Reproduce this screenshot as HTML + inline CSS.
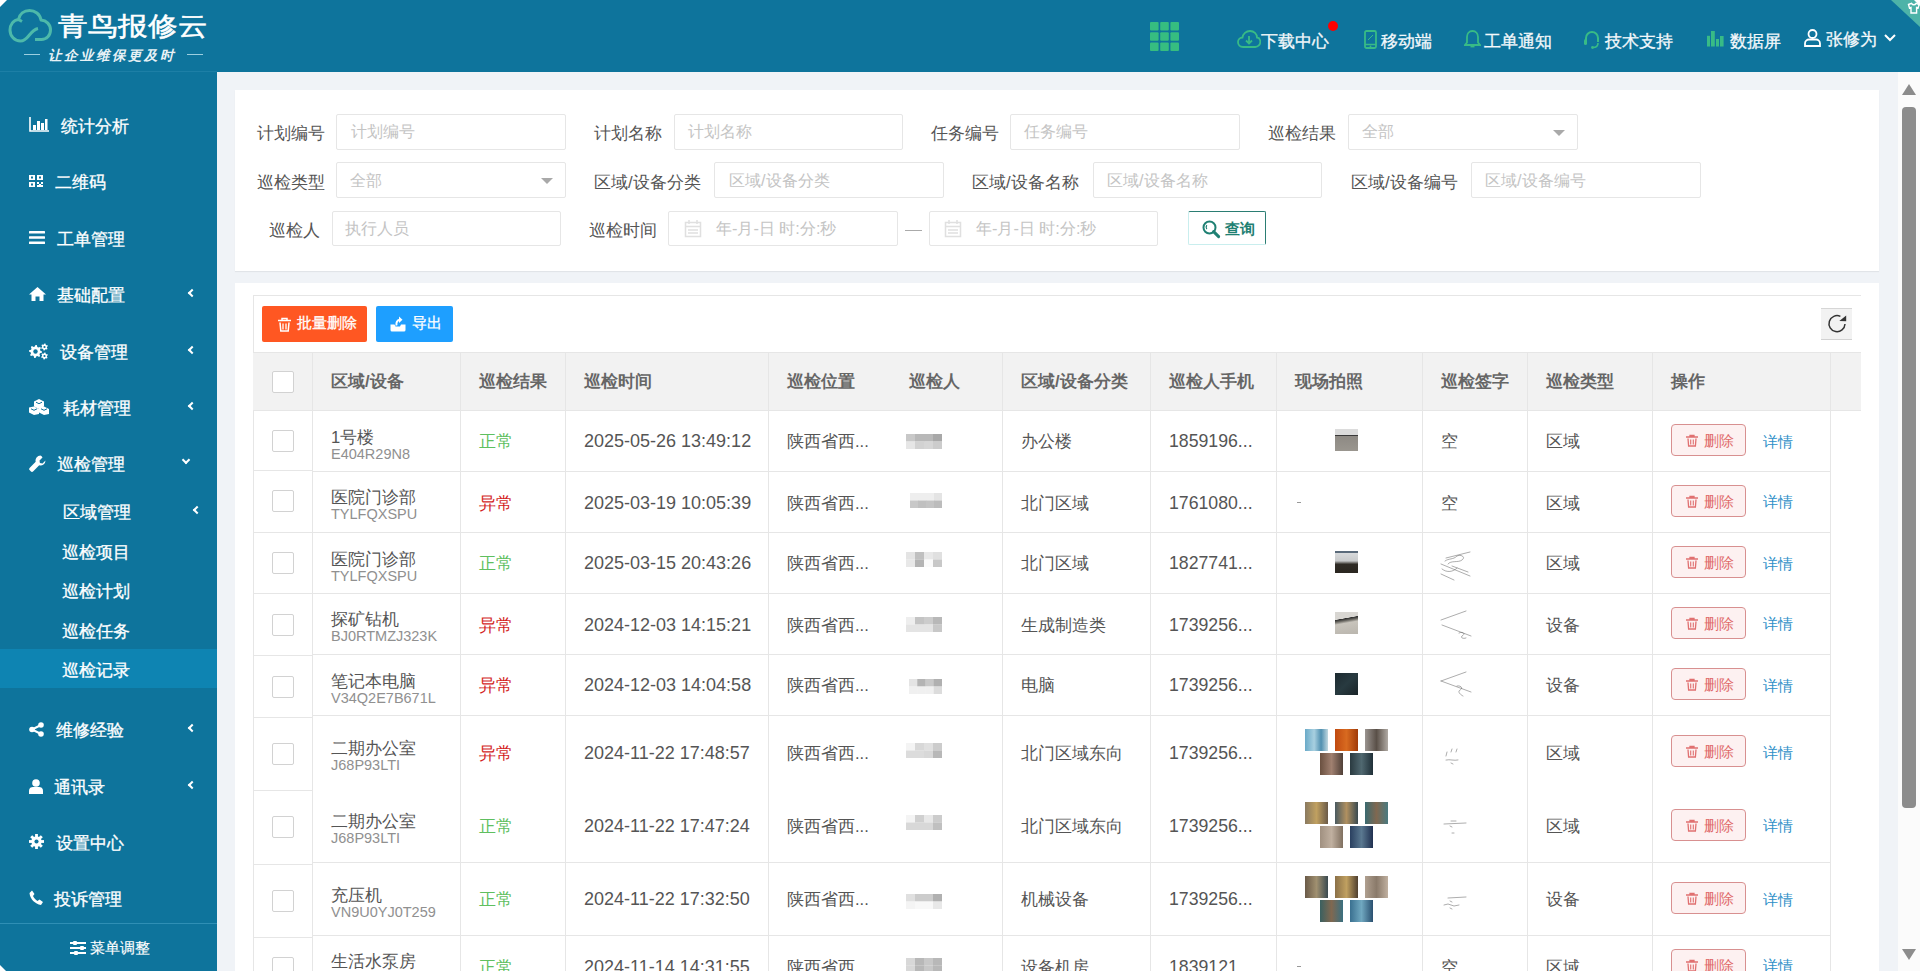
<!DOCTYPE html>
<html><head><meta charset="utf-8">
<style>
*{box-sizing:border-box;margin:0;padding:0}
html,body{width:1920px;height:971px;overflow:hidden;font-family:"Liberation Sans",sans-serif;background:#f0f3f7;position:relative}
.abs{position:absolute}
#hdr{position:absolute;left:0;top:0;width:1920px;height:72px;background:#0e749c}
#logo{position:absolute;left:0;top:0;width:217px;height:72px;border-bottom:1px solid #1d7fa6}
.nav{position:absolute;top:31px;-webkit-text-stroke:0.3px #f4f8fb;height:22px;color:#f4f8fb;font-size:17px;line-height:22px;white-space:nowrap}
#side{position:absolute;left:0;top:72px;width:217px;height:899px;background:#0e749c}
.mi{position:absolute;left:0;width:217px;height:40px;color:#fff;font-size:17px;-webkit-text-stroke:0.3px #fff;line-height:40px;white-space:nowrap}
.mi .t{position:absolute;top:1.5px}
.mi svg{position:absolute}
.chev{position:absolute;width:6px;height:6px;border-left:2px solid #fff;border-bottom:2px solid #fff}
#sbar{position:absolute;left:1898px;top:72px;width:22px;height:899px;background:#fbfbfb}

#card1{position:absolute;left:235px;top:90px;width:1644px;height:181px;background:#fff;box-shadow:0 1px 1px rgba(0,0,0,.06)}
.lb{position:absolute;height:22px;line-height:22px;font-size:16.6px;color:#555;white-space:nowrap}
.ip{position:absolute;height:36px;border:1px solid #e6e6e6;border-radius:2px;background:#fff}
.ph{position:absolute;top:6px;line-height:22px;font-size:16.3px;color:#c4c4c4;white-space:nowrap}
.caret{position:absolute;top:15px;width:0;height:0;border-left:6px solid transparent;border-right:6px solid transparent;border-top:6px solid #a9a9a9}

.btn{border-radius:2px;color:#fff;font-size:15px;line-height:20px;-webkit-text-stroke:0.3px #fff}
.cb{position:absolute;width:22px;height:22px;border:1px solid #d2d2d2;border-radius:2px;background:#fff}
.th{position:absolute;height:22px;line-height:22px;font-size:16.5px;font-weight:bold;color:#666;white-space:nowrap}
.nm{position:absolute;height:20px;line-height:20px;font-size:16.6px;color:#555;white-space:nowrap}
.cd{position:absolute;height:16px;line-height:16px;font-size:14.5px;color:#909090;white-space:nowrap}
.td{position:absolute;height:22px;line-height:22px;font-size:16.5px;color:#555;white-space:nowrap}
.tm{font-size:18px}
.phn{font-size:17.7px !important}
.blur{width:36px;height:14px;background:linear-gradient(90deg,#e4e4e4 0,#d4d4d4 25%,#c8c8c8 50%,#d0d0d0 75%,#bcbcbc 100%);opacity:.85}
.del{width:75px;height:32px;border:1px solid #d89090;border-radius:4px;background:#fdf1f1;color:#e06a6a;font-size:14.6px;line-height:20px}
.lk{position:absolute;height:20px;line-height:20px;font-size:14.6px;color:#2e8fc8;white-space:nowrap}
</style></head><body>
<div id="hdr">
  <div id="logo">
    <svg class="abs" style="left:0;top:0" width="60" height="50" viewBox="0 0 60 50"><path d="M35 39.5H41.5C46.5 39.5 50.5 35.5 50.5 30C50.5 24.5 46.5 20.5 41 20C40 14 35 10.5 29.5 10.5C24 10.5 19.5 14 18.5 19.5C13.5 20 10 24.5 10 30C10 36 14.5 41 20.5 41C24.5 41 27 38 29 35.5C31 33 33.5 29.5 38 28.5M18.5 19.5L22 21.5" fill="none" stroke="#4db9aa" stroke-width="3" stroke-linejoin="round"/></svg>
    <div class="abs" style="left:58px;top:9px;font-size:30px;line-height:36px;color:#fff;font-weight:normal;-webkit-text-stroke:0.6px #fff;transform:scaleY(0.88);transform-origin:0 14px">青鸟报修云</div>
    <div class="abs" style="left:24px;top:54px;width:16px;height:1px;background:#9ccfe0"></div>
    <div class="abs" style="left:48px;top:48px;font-size:13.5px;line-height:16px;color:#e8f2f6;letter-spacing:2px;font-weight:bold;font-style:italic;font-family:'Liberation Serif',serif">让企业维保更及时</div>
    <div class="abs" style="left:187px;top:54px;width:16px;height:1px;background:#9ccfe0"></div>
  </div>
  
  <svg class="abs" style="left:1150px;top:22px" width="29" height="29" viewBox="0 0 29 29"><g fill="#36bd80"><rect x="0" y="0" width="8.6" height="8.6" rx="1"/><rect x="10.2" y="0" width="8.6" height="8.6" rx="1"/><rect x="20.4" y="0" width="8.6" height="8.6" rx="1"/><rect x="0" y="10.2" width="8.6" height="8.6" rx="1"/><rect x="10.2" y="10.2" width="8.6" height="8.6" rx="1"/><rect x="20.4" y="10.2" width="8.6" height="8.6" rx="1"/><rect x="0" y="20.4" width="8.6" height="8.6" rx="1"/><rect x="10.2" y="20.4" width="8.6" height="8.6" rx="1"/><rect x="20.4" y="20.4" width="8.6" height="8.6" rx="1"/></g></svg>
  <svg class="abs" style="left:1237px;top:30px" width="24" height="18" viewBox="0 0 24 18"><path d="M6 17C3 17 1 15 1 12c0-2.5 2-4.5 4.5-4.5C6 4 9 1 13 1c4 0 7 3 7 6.5 2 .3 3.3 2.2 3.3 4.3 0 2.8-2.2 5.2-5 5.2z" fill="none" stroke="#38bb86" stroke-width="1.8"/><path d="M12 6v7M9 10.5l3 3 3-3" stroke="#38bb86" stroke-width="1.8" fill="none"/></svg>
  <div class="nav" style="left:1261px">下载中心</div>
  <div class="abs" style="left:1328px;top:21px;width:10px;height:10px;border-radius:50%;background:#f00"></div>
  <svg class="abs" style="left:1364px;top:30px" width="13" height="19" viewBox="0 0 13 19"><rect x="1" y="1" width="11" height="17" rx="1.5" fill="none" stroke="#38bb86" stroke-width="1.8"/><path d="M1 14.5h11" stroke="#38bb86" stroke-width="1.5"/><circle cx="6.5" cy="16.3" r=".9" fill="#38bb86"/><path d="M4 10l5-5" stroke="#38bb86" stroke-width="1"/></svg>
  <div class="nav" style="left:1381px">移动端</div>
  <svg class="abs" style="left:1464px;top:30px" width="17" height="18" viewBox="0 0 17 18"><path d="M8.5 1c-3.5 0-5.5 2.7-5.5 6v5.5L1 15h15l-2-2.5V7c0-3.3-2-6-5.5-6z" fill="none" stroke="#38bb86" stroke-width="1.8"/><path d="M6.5 16.5h4" stroke="#38bb86" stroke-width="1.8"/></svg>
  <div class="nav" style="left:1484px">工单通知</div>
  <svg class="abs" style="left:1583px;top:30px" width="18" height="19" viewBox="0 0 18 19"><path d="M3 12V8a6 6 0 0 1 12 0v4" fill="none" stroke="#38bb86" stroke-width="2"/><rect x="1" y="9" width="3" height="6" rx="1.5" fill="#38bb86"/><path d="M15 13c0 3-2 4.5-5 4.5" fill="none" stroke="#38bb86" stroke-width="1.6"/><circle cx="9.5" cy="17.5" r="1.4" fill="#38bb86"/></svg>
  <div class="nav" style="left:1605px">技术支持</div>
  <svg class="abs" style="left:1707px;top:30px" width="17" height="17" viewBox="0 0 17 17"><g fill="#38bb86"><rect x="0" y="5.8" width="3" height="10.7"/><rect x="4" y="1" width="3.8" height="15.5"/><rect x="9" y="9" width="3" height="7.5"/><rect x="13" y="6" width="3.6" height="10.5"/></g></svg>
  <div class="nav" style="left:1730px">数据屏</div>
  <svg class="abs" style="left:1804px;top:29px" width="17" height="18" viewBox="0 0 17 18"><circle cx="8.5" cy="5" r="4" fill="none" stroke="#fff" stroke-width="1.8"/><path d="M1 17v-2.5c0-2.5 2-4 4-4h7c2 0 4 1.5 4 4V17z" fill="none" stroke="#fff" stroke-width="1.8"/></svg>
  <div class="nav" style="left:1826px;top:29px">张修为</div>
  <svg class="abs" style="left:1884px;top:34px" width="12" height="8" viewBox="0 0 12 8"><path d="M1 1l5 5 5-5" fill="none" stroke="#fff" stroke-width="2"/></svg>
  <svg class="abs" style="left:1880px;top:0" width="40" height="40" viewBox="0 0 40 40"><path d="M11 0H40V27z" fill="#4db3a8"/><path d="M34 0h6v6z" fill="#fff"/><path d="M28.5 4.5l3-1.2c.6 1 1.4 1.5 2.3 1.5s1.7-.5 2.3-1.5l3 1.2-1 3.5-1.5-.5V13h-5.6V7.5l-1.5.5z" fill="none" stroke="#fff" stroke-width="1.4"/></svg>
<div class="abs" style="left:0;top:0;width:0;height:0;border-top:7px solid #fff;border-right:7px solid transparent"></div>
</div>
<div id="side">
<!-- y offsets relative to side top (72) -->
<div class="mi" style="top:33px"><svg style="left:29px;top:12px" width="20" height="15" viewBox="0 0 20 15"><path d="M1 0V14H20" stroke="#fff" stroke-width="1.6" fill="none"/><rect x="4" y="8" width="3" height="5" fill="#fff"/><rect x="8" y="4" width="3" height="9" fill="#fff"/><rect x="12" y="6" width="3" height="7" fill="#fff"/><rect x="16" y="2" width="2.5" height="11" fill="#fff"/></svg><span class="t" style="left:61px">统计分析</span></div>
<div class="mi" style="top:89px"><svg style="left:29px;top:14px" width="14" height="12" viewBox="0 0 14 12"><path d="M0 0h6v5H0zM8 0h6v5H8zM0 7h6v5H0z" fill="#fff"/><path d="M2 1.5h2v2H2zM10 1.5h2v2h-2zM2 8.5h2v2H2z" fill="#0f739c"/><path d="M8 7h2v2H8zM12 7h2v2h-2zM10 9h2v3h-2zM8 10h2v2H8zM12 10h2v2h-2z" fill="#fff"/></svg><span class="t" style="left:55px">二维码</span></div>
<div class="mi" style="top:146px"><svg style="left:29px;top:13px" width="16" height="13" viewBox="0 0 16 13"><rect y="0" width="16" height="2.6" rx=".5" fill="#fff"/><rect y="5.2" width="16" height="2.6" rx=".5" fill="#fff"/><rect y="10.4" width="16" height="2.6" rx=".5" fill="#fff"/></svg><span class="t" style="left:57px">工单管理</span></div>
<div class="mi" style="top:202px"><svg style="left:29px;top:13px" width="17" height="14" viewBox="0 0 17 14"><path d="M8.5 0L17 7.5h-2.5V14h-4V9.5h-4V14h-4V7.5H0z" fill="#fff"/></svg><span class="t" style="left:57px">基础配置</span><i class="chev" style="left:189px;top:16px;transform:rotate(45deg)"></i></div>
<div class="mi" style="top:259px"><svg style="left:29px;top:12px" width="20" height="17" viewBox="0 0 20 17"><path d="M6.50 2.00L7.77 2.12L8.34 4.07L9.17 4.51L11.10 3.90L11.90 4.89L10.93 6.66L11.21 7.56L13.00 8.50L12.88 9.77L10.93 10.34L10.49 11.17L11.10 13.10L10.11 13.90L8.34 12.93L7.44 13.21L6.50 15.00L5.23 14.88L4.66 12.93L3.83 12.49L1.90 13.10L1.10 12.11L2.07 10.34L1.79 9.44L0.00 8.50L0.12 7.23L2.07 6.66L2.51 5.83L1.90 3.90L2.89 3.10L4.66 4.07L5.56 3.79z" fill="#fff"/><circle cx="6.5" cy="8.5" r="2.2" fill="#0e749c"/><path d="M15.50 0.50L16.41 0.62L16.75 1.83L17.27 2.23L18.53 2.25L18.88 3.09L18.00 4.00L17.91 4.65L18.53 5.75L17.97 6.47L16.75 6.17L16.15 6.41L15.50 7.50L14.59 7.38L14.25 6.17L13.73 5.77L12.47 5.75L12.12 4.91L13.00 4.00L13.09 3.35L12.47 2.25L13.03 1.53L14.25 1.83L14.85 1.59z" fill="#fff"/><circle cx="15.5" cy="4" r="1.1" fill="#0e749c"/><path d="M15.50 9.50L16.41 9.62L16.75 10.83L17.27 11.23L18.53 11.25L18.88 12.09L18.00 13.00L17.91 13.65L18.53 14.75L17.97 15.47L16.75 15.17L16.15 15.41L15.50 16.50L14.59 16.38L14.25 15.17L13.73 14.77L12.47 14.75L12.12 13.91L13.00 13.00L13.09 12.35L12.47 11.25L13.03 10.53L14.25 10.83L14.85 10.59z" fill="#fff"/><circle cx="15.5" cy="13" r="1.1" fill="#0e749c"/></svg><span class="t" style="left:60px">设备管理</span><i class="chev" style="left:189px;top:16px;transform:rotate(45deg)"></i></div>
<div class="mi" style="top:315px"><svg style="left:29px;top:12px" width="20" height="16" viewBox="0 0 20 16"><path d="M10 0l5 2.5v5L10 10 5 7.5v-5z" fill="#fff"/><path d="M5 7.5l5 2.5v5l-5 1-5-2.5v-5z" fill="#fff"/><path d="M15 7.5l5 2.5v5l-5 1-5-2.5v-5z" fill="#fff"/><path d="M7 3.2l3 1.5 3-1.5M2 9.8l3 1.5 3-1.5M12 9.8l3 1.5 3-1.5" stroke="#0f739c" stroke-width="1" fill="none"/></svg><span class="t" style="left:63px">耗材管理</span><i class="chev" style="left:189px;top:16px;transform:rotate(45deg)"></i></div>
<div class="mi" style="top:371px"><svg style="left:29px;top:12px" width="17" height="17" viewBox="0 0 17 17"><path d="M11.5 0.5a5 5 0 0 0-4.8 6.3L0.8 12.7a1.8 1.8 0 0 0 0 2.6l0.9 0.9a1.8 1.8 0 0 0 2.6 0l5.9-5.9A5 5 0 0 0 16.5 5.5l-3 3-2.6-0.4-0.4-2.6 3-3a5 5 0 0 0-2-2z" fill="#fff"/></svg><span class="t" style="left:57px">巡检管理</span><i class="chev" style="left:183px;top:14px;transform:rotate(-45deg)"></i></div>
<div class="mi" style="top:419px"><span class="t" style="left:63px">区域管理</span><i class="chev" style="left:194px;top:16px;transform:rotate(45deg)"></i></div>
<div class="mi" style="top:459px"><span class="t" style="left:62px">巡检项目</span></div>
<div class="mi" style="top:498px"><span class="t" style="left:62px">巡检计划</span></div>
<div class="mi" style="top:538px"><span class="t" style="left:62px">巡检任务</span></div>
<div class="mi" style="top:577px;height:39px;background:#0e84b2"><span class="t" style="left:62px">巡检记录</span></div>
<div class="mi" style="top:637px"><svg style="left:29px;top:13px" width="15" height="15" viewBox="0 0 15 15"><circle cx="12" cy="3" r="2.8" fill="#fff"/><circle cx="3" cy="7.5" r="2.8" fill="#fff"/><circle cx="12" cy="12" r="2.8" fill="#fff"/><path d="M12 3L3 7.5 12 12" stroke="#fff" stroke-width="2" fill="none"/></svg><span class="t" style="left:56px">维修经验</span><i class="chev" style="left:189px;top:16px;transform:rotate(45deg)"></i></div>
<div class="mi" style="top:694px"><svg style="left:29px;top:13px" width="14" height="15" viewBox="0 0 14 15"><circle cx="7" cy="4" r="3.8" fill="#fff"/><path d="M0 15v-3.5C0 9 2 8 4 8h6c2 0 4 1 4 3.5V15z" fill="#fff"/></svg><span class="t" style="left:54px">通讯录</span><i class="chev" style="left:189px;top:16px;transform:rotate(45deg)"></i></div>
<div class="mi" style="top:750px"><svg style="left:29px;top:12px" width="15" height="15" viewBox="0 0 16 16"><g fill="#fff"><circle cx="8" cy="8" r="5.5"/><rect x="6.5" y="0" width="3" height="4" transform="rotate(0 8 8)"/><rect x="6.5" y="0" width="3" height="4" transform="rotate(45 8 8)"/><rect x="6.5" y="0" width="3" height="4" transform="rotate(90 8 8)"/><rect x="6.5" y="0" width="3" height="4" transform="rotate(135 8 8)"/><rect x="6.5" y="0" width="3" height="4" transform="rotate(180 8 8)"/><rect x="6.5" y="0" width="3" height="4" transform="rotate(225 8 8)"/><rect x="6.5" y="0" width="3" height="4" transform="rotate(270 8 8)"/><rect x="6.5" y="0" width="3" height="4" transform="rotate(315 8 8)"/></g><circle cx="8" cy="8" r="2.2" fill="#0f739c"/></svg><span class="t" style="left:56px">设置中心</span></div>
<div class="mi" style="top:806px"><svg style="left:29px;top:12px" width="14" height="15" viewBox="0 0 14 15"><path d="M3 0.5L5.5 4 4 6c1 2 2.5 3.8 4.5 5l2-1.5L14 12l-2 3C6 14 1 9 0.5 3z" fill="#fff"/></svg><span class="t" style="left:54px">投诉管理</span></div>
<div class="abs" style="left:0;top:851px;width:217px;height:1px;background:#2f8fb5"></div>
<div class="mi" style="top:854px;font-size:15px;-webkit-text-stroke:0.15px #fff"><svg style="left:70px;top:15px" width="16" height="14" viewBox="0 0 16 14"><path d="M0 2h16M0 7h16M0 12h16" stroke="#fff" stroke-width="2"/><rect x="3" y="0" width="4" height="4" rx="1" fill="#fff"/><rect x="10" y="5" width="4" height="4" rx="1" fill="#fff"/><rect x="4" y="10" width="4" height="4" rx="1" fill="#fff"/></svg><span class="t" style="left:90px">菜单调整</span></div>
<div class="abs" style="left:0;top:893px;width:0;height:0;border-bottom:6px solid #fff;border-right:6px solid transparent"></div>
</div>

<div id="card1"></div>
<div class="lb" style="left:257px;top:123px">计划编号</div>
<div class="ip" style="left:336px;top:114px;width:230px"><span class="ph" style="left:14px;top:5px">计划编号</span></div>
<div class="lb" style="left:594px;top:123px">计划名称</div>
<div class="ip" style="left:674px;top:114px;width:229px"><span class="ph" style="left:13px;top:5px">计划名称</span></div>
<div class="lb" style="left:931px;top:123px">任务编号</div>
<div class="ip" style="left:1010px;top:114px;width:230px"><span class="ph" style="left:13px;top:5px">任务编号</span></div>
<div class="lb" style="left:1268px;top:123px">巡检结果</div>
<div class="ip" style="left:1348px;top:114px;width:230px"><span class="ph" style="left:13px;top:5px">全部</span><i class="caret" style="left:204px"></i></div>

<div class="lb" style="left:257px;top:172px">巡检类型</div>
<div class="ip" style="left:336px;top:162px;width:230px"><span class="ph" style="left:13px">全部</span><i class="caret" style="left:204px;top:15px"></i></div>
<div class="lb" style="left:594px;top:172px">区域/设备分类</div>
<div class="ip" style="left:714px;top:162px;width:230px"><span class="ph" style="left:14px">区域/设备分类</span></div>
<div class="lb" style="left:972px;top:172px">区域/设备名称</div>
<div class="ip" style="left:1093px;top:162px;width:229px"><span class="ph" style="left:13px">区域/设备名称</span></div>
<div class="lb" style="left:1351px;top:172px">区域/设备编号</div>
<div class="ip" style="left:1471px;top:162px;width:230px"><span class="ph" style="left:13px">区域/设备编号</span></div>

<div class="lb" style="left:269px;top:220px">巡检人</div>
<div class="ip" style="left:332px;top:211px;width:229px;height:35px"><span class="ph" style="left:12px;top:5px">执行人员</span></div>
<div class="lb" style="left:589px;top:220px">巡检时间</div>
<div class="ip" style="left:668px;top:211px;width:230px;height:35px"><svg class="abs" style="left:15px;top:7px" width="18" height="19" viewBox="0 0 18 19"><path d="M1.5 3.5h15v14h-15z" fill="none" stroke="#e0e0e0" stroke-width="1.5"/><path d="M1.5 7.5h15M5 1v4M13 1v4M4 11h10M4 14h10" stroke="#e0e0e0" stroke-width="1.5"/></svg><span class="ph" style="left:47px;top:5px">年-月-日 时:分:秒</span></div>
<div class="abs" style="left:905px;top:230px;width:17px;height:1px;background:#aaa"></div>
<div class="ip" style="left:929px;top:211px;width:229px;height:35px"><svg class="abs" style="left:14px;top:7px" width="18" height="19" viewBox="0 0 18 19"><path d="M1.5 3.5h15v14h-15z" fill="none" stroke="#e0e0e0" stroke-width="1.5"/><path d="M1.5 7.5h15M5 1v4M13 1v4M4 11h10M4 14h10" stroke="#e0e0e0" stroke-width="1.5"/></svg><span class="ph" style="left:46px;top:5px">年-月-日 时:分:秒</span></div>
<div class="abs" style="left:1188px;top:211px;width:78px;height:34px;border:1px solid #2b7d73;border-left-color:#c9eeee;border-bottom-color:#c9eeee;border-radius:2px;background:#fff"><svg class="abs" style="left:13px;top:8px" width="19" height="19" viewBox="0 0 19 19"><circle cx="7.5" cy="7.5" r="6" fill="none" stroke="#1f8073" stroke-width="2"/><path d="M4.8 5.2a3.5 3.5 0 0 0 0 4" fill="none" stroke="#1f8073" stroke-width="1.2"/><path d="M11.6 11.6l5 5" stroke="#1f8073" stroke-width="3" stroke-linecap="round"/></svg><span class="abs" style="left:36px;top:7px;font-size:15px;line-height:20px;font-weight:bold;color:#1f8073">查询</span></div>
<div class="abs" style="left:235px;top:283px;width:1644px;height:688px;background:#fff"></div>
<div class="abs" style="left:253px;top:295px;width:1608px;height:676px;border-top:1px solid #e6e6e6;border-left:1px solid #e6e6e6"></div>
<div class="abs btn" style="left:262px;top:306px;width:105px;height:36px;background:#ff5722"><svg class="abs" style="left:15px;top:11px" width="15" height="15" viewBox="0 0 15 15"><path d="M1 3.5h13M5 3.5V1.5h5v2M3 5.5l.8 8.5h7.4l.8-8.5" fill="none" stroke="#fff" stroke-width="1.5"/><path d="M6 6.5v6M9 6.5v6" stroke="#fff" stroke-width="1.3"/></svg><span class="abs" style="left:35px;top:7px">批量删除</span></div>
<div class="abs btn" style="left:376px;top:306px;width:77px;height:36px;background:#1e9fff"><svg class="abs" style="left:14px;top:10px" width="16" height="16" viewBox="0 0 16 16"><path d="M0.5 8.5h4l1 2h4.5l1-2h4.5v5.5a1.5 1.5 0 0 1-1.5 1.5h-12a1.5 1.5 0 0 1-1.5-1.5z" fill="#fff"/><path d="M6.5 9.5C6 6.5 7 4.2 9.8 3.8" fill="none" stroke="#fff" stroke-width="2"/><path d="M9 0.5L12.5 3.8 9 7z" fill="#fff"/></svg><span class="abs" style="left:36px;top:7px">导出</span></div>
<div class="abs" style="left:1821px;top:308px;width:31px;height:32px;background:#f2f2f2;border-top:1px solid #d6d6d6;border-bottom:1px solid #d2d2d2"><svg class="abs" style="left:6px;top:5px" width="20" height="20" viewBox="0 0 20 20"><path d="M18 10A8 8 0 1 1 13.4 2.4" fill="none" stroke="#333" stroke-width="1.5"/><path d="M12.3 7L19.2 1.6V7.3z" fill="#333"/></svg></div>
<div class="abs" style="left:253px;top:352px;width:1608px;height:59px;background:#f2f2f2;border-top:1px solid #e6e6e6;border-bottom:1px solid #e6e6e6"></div>
<div class="abs" style="left:312px;top:352px;width:1px;height:59px;background:#e6e6e6"></div>
<div class="abs" style="left:460px;top:352px;width:1px;height:59px;background:#e6e6e6"></div>
<div class="abs" style="left:565px;top:352px;width:1px;height:59px;background:#e6e6e6"></div>
<div class="abs" style="left:768px;top:352px;width:1px;height:59px;background:#e6e6e6"></div>
<div class="abs" style="left:1002px;top:352px;width:1px;height:59px;background:#e6e6e6"></div>
<div class="abs" style="left:1150px;top:352px;width:1px;height:59px;background:#e6e6e6"></div>
<div class="abs" style="left:1276px;top:352px;width:1px;height:59px;background:#e6e6e6"></div>
<div class="abs" style="left:1422px;top:352px;width:1px;height:59px;background:#e6e6e6"></div>
<div class="abs" style="left:1527px;top:352px;width:1px;height:59px;background:#e6e6e6"></div>
<div class="abs" style="left:1652px;top:352px;width:1px;height:59px;background:#e6e6e6"></div>
<div class="abs" style="left:1830px;top:352px;width:1px;height:59px;background:#e6e6e6"></div>
<div class="abs cb" style="left:272px;top:371px"></div>
<div class="th" style="left:331px;top:370px">区域/设备</div>
<div class="th" style="left:479px;top:370px">巡检结果</div>
<div class="th" style="left:584px;top:370px">巡检时间</div>
<div class="th" style="left:787px;top:370px">巡检位置</div>
<div class="th" style="left:909px;top:370px">巡检人</div>
<div class="th" style="left:1021px;top:370px">区域/设备分类</div>
<div class="th" style="left:1169px;top:370px">巡检人手机</div>
<div class="th" style="left:1295px;top:370px">现场拍照</div>
<div class="th" style="left:1441px;top:370px">巡检签字</div>
<div class="th" style="left:1546px;top:370px">巡检类型</div>
<div class="th" style="left:1671px;top:370px">操作</div>
<div class="abs" style="left:312px;top:471px;width:1518px;height:1px;background:#e6e6e6"></div>
<div class="abs" style="left:312px;top:532px;width:1518px;height:1px;background:#e6e6e6"></div>
<div class="abs" style="left:312px;top:593px;width:1518px;height:1px;background:#e6e6e6"></div>
<div class="abs" style="left:312px;top:654px;width:1518px;height:1px;background:#e6e6e6"></div>
<div class="abs" style="left:312px;top:715px;width:1518px;height:1px;background:#e6e6e6"></div>
<div class="abs" style="left:312px;top:862px;width:1518px;height:1px;background:#e6e6e6"></div>
<div class="abs" style="left:312px;top:935px;width:1518px;height:1px;background:#e6e6e6"></div>
<div class="abs" style="left:253px;top:470px;width:59px;height:1px;background:#e6e6e6"></div>
<div class="abs" style="left:253px;top:532px;width:59px;height:1px;background:#e6e6e6"></div>
<div class="abs" style="left:253px;top:593px;width:59px;height:1px;background:#e6e6e6"></div>
<div class="abs" style="left:253px;top:655px;width:59px;height:1px;background:#e6e6e6"></div>
<div class="abs" style="left:253px;top:717px;width:59px;height:1px;background:#e6e6e6"></div>
<div class="abs" style="left:253px;top:790px;width:59px;height:1px;background:#e6e6e6"></div>
<div class="abs" style="left:253px;top:864px;width:59px;height:1px;background:#e6e6e6"></div>
<div class="abs" style="left:253px;top:937px;width:59px;height:1px;background:#e6e6e6"></div>
<div class="abs" style="left:312px;top:410px;width:1px;height:561px;background:#e6e6e6"></div>
<div class="abs" style="left:460px;top:410px;width:1px;height:561px;background:#e6e6e6"></div>
<div class="abs" style="left:565px;top:410px;width:1px;height:561px;background:#e6e6e6"></div>
<div class="abs" style="left:768px;top:410px;width:1px;height:561px;background:#e6e6e6"></div>
<div class="abs" style="left:1002px;top:410px;width:1px;height:561px;background:#e6e6e6"></div>
<div class="abs" style="left:1150px;top:410px;width:1px;height:561px;background:#e6e6e6"></div>
<div class="abs" style="left:1276px;top:410px;width:1px;height:561px;background:#e6e6e6"></div>
<div class="abs" style="left:1422px;top:410px;width:1px;height:561px;background:#e6e6e6"></div>
<div class="abs" style="left:1527px;top:410px;width:1px;height:561px;background:#e6e6e6"></div>
<div class="abs" style="left:1652px;top:410px;width:1px;height:561px;background:#e6e6e6"></div>
<div class="abs" style="left:1830px;top:410px;width:1px;height:561px;background:#e6e6e6"></div>
<div class="abs cb" style="left:272px;top:430px"></div>
<div class="nm" style="left:331px;top:428px">1号楼</div>
<div class="cd" style="left:331px;top:446px">E404R29N8</div>
<div class="td" style="left:479px;top:430px;color:#5fbf5f">正常</div>
<div class="td tm" style="left:584px;top:430px">2025-05-26 13:49:12</div>
<div class="td" style="left:787px;top:430px">陕西省西...</div>
<svg class="abs" style="left:906px;top:434px" width="36" height="15"><rect x="0.00" y="0" width="9.30" height="7.6" fill="#c8c8c8"/><rect x="9.00" y="0" width="9.30" height="7.6" fill="#b8b8b8"/><rect x="18.00" y="0" width="9.30" height="7.6" fill="#b8b8b8"/><rect x="27.00" y="0" width="9.30" height="7.6" fill="#a8a8a8"/><rect x="0.00" y="7.5" width="9.30" height="7.5" fill="#e6e6e6"/><rect x="9.00" y="7.5" width="9.30" height="7.5" fill="#d2d2d2"/><rect x="18.00" y="7.5" width="9.30" height="7.5" fill="#d6d6d6"/><rect x="27.00" y="7.5" width="9.30" height="7.5" fill="#cccccc"/></svg>
<div class="td" style="left:1021px;top:430px">办公楼</div>
<div class="td tm phn" style="left:1169px;top:430px">1859196...</div>
<div class="abs" style="left:1335px;top:429px;width:23px;height:22px;background:linear-gradient(#dcdcdc 0,#dcdcdc 26%,#3a3a3a 26%,#3a3a3a 34%,#8e8a84 34%,#9a968f 100%)"></div>
<div class="td" style="left:1441px;top:430px">空</div>
<div class="td" style="left:1546px;top:430px">区域</div>
<div class="abs del" style="left:1671px;top:424px"><svg class="abs" style="left:13px;top:9px" width="14" height="13" viewBox="0 0 14 13"><path d="M1 3h12M5 3V1.5h4V3M3 4.5l.6 7.5h6.8l.6-7.5" fill="none" stroke="#e07070" stroke-width="1.3"/><path d="M5.7 5.5v5M8.3 5.5v5" stroke="#e07070" stroke-width="1.1"/></svg><span class="abs" style="left:32px;top:6px">删除</span></div>
<div class="abs lk" style="left:1763px;top:432px">详情</div>
<div class="abs cb" style="left:272px;top:490px"></div>
<div class="nm" style="left:331px;top:488px">医院门诊部</div>
<div class="cd" style="left:331px;top:506px">TYLFQXSPU</div>
<div class="td" style="left:479px;top:492px;color:#d41f1f">异常</div>
<div class="td tm" style="left:584px;top:492px">2025-03-19 10:05:39</div>
<div class="td" style="left:787px;top:492px">陕西省西...</div>
<svg class="abs" style="left:910px;top:493px" width="32" height="15"><rect x="0.00" y="0" width="8.30" height="7.6" fill="#eeeeee"/><rect x="8.00" y="0" width="8.30" height="7.6" fill="#eeeeee"/><rect x="16.00" y="0" width="8.30" height="7.6" fill="#eeeeee"/><rect x="24.00" y="0" width="8.30" height="7.6" fill="#e4e4e4"/><rect x="0.00" y="7.5" width="8.30" height="7.5" fill="#c8c8c8"/><rect x="8.00" y="7.5" width="8.30" height="7.5" fill="#c0c0c0"/><rect x="16.00" y="7.5" width="8.30" height="7.5" fill="#c4c4c4"/><rect x="24.00" y="7.5" width="8.30" height="7.5" fill="#bcbcbc"/></svg>
<div class="td" style="left:1021px;top:492px">北门区域</div>
<div class="td tm phn" style="left:1169px;top:492px">1761080...</div>
<div class="abs" style="left:1297px;top:502px;width:4px;height:1px;background:#999"></div>
<div class="td" style="left:1441px;top:492px">空</div>
<div class="td" style="left:1546px;top:492px">区域</div>
<div class="abs del" style="left:1671px;top:485px"><svg class="abs" style="left:13px;top:9px" width="14" height="13" viewBox="0 0 14 13"><path d="M1 3h12M5 3V1.5h4V3M3 4.5l.6 7.5h6.8l.6-7.5" fill="none" stroke="#e07070" stroke-width="1.3"/><path d="M5.7 5.5v5M8.3 5.5v5" stroke="#e07070" stroke-width="1.1"/></svg><span class="abs" style="left:32px;top:6px">删除</span></div>
<div class="abs lk" style="left:1763px;top:492px">详情</div>
<div class="abs cb" style="left:272px;top:552px"></div>
<div class="nm" style="left:331px;top:550px">医院门诊部</div>
<div class="cd" style="left:331px;top:568px">TYLFQXSPU</div>
<div class="td" style="left:479px;top:552px;color:#5fbf5f">正常</div>
<div class="td tm" style="left:584px;top:552px">2025-03-15 20:43:26</div>
<div class="td" style="left:787px;top:552px">陕西省西...</div>
<svg class="abs" style="left:906px;top:552px" width="36" height="15"><rect x="0.00" y="0" width="9.30" height="7.6" fill="#e4e4e4"/><rect x="9.00" y="0" width="9.30" height="7.6" fill="#c0c0c0"/><rect x="18.00" y="0" width="9.30" height="7.6" fill="#e8e8e8"/><rect x="27.00" y="0" width="9.30" height="7.6" fill="#e0e0e0"/><rect x="0.00" y="7.5" width="9.30" height="7.5" fill="#e8e8e8"/><rect x="9.00" y="7.5" width="9.30" height="7.5" fill="#b4b4b4"/><rect x="18.00" y="7.5" width="9.30" height="7.5" fill="#fafafa"/><rect x="27.00" y="7.5" width="9.30" height="7.5" fill="#c8c8c8"/></svg>
<div class="td" style="left:1021px;top:552px">北门区域</div>
<div class="td tm phn" style="left:1169px;top:552px">1827741...</div>
<div class="abs" style="left:1335px;top:551px;width:23px;height:22px;background:linear-gradient(#5a6a7a 0,#5a6a7a 8%,#d8dadc 8%,#c8cacb 45%,#302c26 60%,#2a2620 100%)"></div>
<svg class="abs" style="left:1440px;top:551px" width="32" height="30" viewBox="0 0 32 30"><path d="M5 10C9 7 13 9 17 5C21 3 26 6 22 9C18 12 11 9 8 13M6 7L30 1M1 13L30 25M2 18C7 22 13 21 17 17M1 23L14 29M12 15L28 21" fill="none" stroke="#666" stroke-width=".9" opacity=".6" stroke-linecap="round"/></svg>
<div class="td" style="left:1546px;top:552px">区域</div>
<div class="abs del" style="left:1671px;top:546px"><svg class="abs" style="left:13px;top:9px" width="14" height="13" viewBox="0 0 14 13"><path d="M1 3h12M5 3V1.5h4V3M3 4.5l.6 7.5h6.8l.6-7.5" fill="none" stroke="#e07070" stroke-width="1.3"/><path d="M5.7 5.5v5M8.3 5.5v5" stroke="#e07070" stroke-width="1.1"/></svg><span class="abs" style="left:32px;top:6px">删除</span></div>
<div class="abs lk" style="left:1763px;top:554px">详情</div>
<div class="abs cb" style="left:272px;top:614px"></div>
<div class="nm" style="left:331px;top:610px">探矿钻机</div>
<div class="cd" style="left:331px;top:628px">BJ0RTMZJ323K</div>
<div class="td" style="left:479px;top:614px;color:#d41f1f">异常</div>
<div class="td tm" style="left:584px;top:614px">2024-12-03 14:15:21</div>
<div class="td" style="left:787px;top:614px">陕西省西...</div>
<svg class="abs" style="left:906px;top:617px" width="36" height="15"><rect x="0.00" y="0" width="9.30" height="7.6" fill="#eeeeee"/><rect x="9.00" y="0" width="9.30" height="7.6" fill="#c4c4c4"/><rect x="18.00" y="0" width="9.30" height="7.6" fill="#cccccc"/><rect x="27.00" y="0" width="9.30" height="7.6" fill="#b8b8b8"/><rect x="0.00" y="7.5" width="9.30" height="7.5" fill="#e4e4e4"/><rect x="9.00" y="7.5" width="9.30" height="7.5" fill="#e4e4e4"/><rect x="18.00" y="7.5" width="9.30" height="7.5" fill="#e4e4e4"/><rect x="27.00" y="7.5" width="9.30" height="7.5" fill="#c8c8c8"/></svg>
<div class="td" style="left:1021px;top:614px">生成制造类</div>
<div class="td tm phn" style="left:1169px;top:614px">1739256...</div>
<div class="abs" style="left:1335px;top:612px;width:23px;height:22px;background:linear-gradient(170deg,#d8d6d2 0,#d8d6d2 30%,#2e2e2e 32%,#6a6862 40%,#c8c4bc 50%,#bab6ae 100%)"></div>
<svg class="abs" style="left:1440px;top:610px" width="32" height="30" viewBox="0 0 32 30"><path d="M1 10L26 1M2 15L31 26M19 23C23 21 26 24 22 26C20 28 24 29 26 28" fill="none" stroke="#666" stroke-width=".9" opacity=".6" stroke-linecap="round"/></svg>
<div class="td" style="left:1546px;top:614px">设备</div>
<div class="abs del" style="left:1671px;top:607px"><svg class="abs" style="left:13px;top:9px" width="14" height="13" viewBox="0 0 14 13"><path d="M1 3h12M5 3V1.5h4V3M3 4.5l.6 7.5h6.8l.6-7.5" fill="none" stroke="#e07070" stroke-width="1.3"/><path d="M5.7 5.5v5M8.3 5.5v5" stroke="#e07070" stroke-width="1.1"/></svg><span class="abs" style="left:32px;top:6px">删除</span></div>
<div class="abs lk" style="left:1763px;top:614px">详情</div>
<div class="abs cb" style="left:272px;top:676px"></div>
<div class="nm" style="left:331px;top:672px">笔记本电脑</div>
<div class="cd" style="left:331px;top:690px">V34Q2E7B671L</div>
<div class="td" style="left:479px;top:674px;color:#d41f1f">异常</div>
<div class="td tm" style="left:584px;top:674px">2024-12-03 14:04:58</div>
<div class="td" style="left:787px;top:674px">陕西省西...</div>
<svg class="abs" style="left:909px;top:679px" width="33" height="15"><rect x="0.00" y="0" width="8.55" height="7.6" fill="#e4e4e4"/><rect x="8.25" y="0" width="8.55" height="7.6" fill="#b4b4b4"/><rect x="16.50" y="0" width="8.55" height="7.6" fill="#c8c8c8"/><rect x="24.75" y="0" width="8.55" height="7.6" fill="#b0b0b0"/><rect x="0.00" y="7.5" width="8.55" height="7.5" fill="#f0f0f0"/><rect x="8.25" y="7.5" width="8.55" height="7.5" fill="#f0f0f0"/><rect x="16.50" y="7.5" width="8.55" height="7.5" fill="#f0f0f0"/><rect x="24.75" y="7.5" width="8.55" height="7.5" fill="#dcdcdc"/></svg>
<div class="td" style="left:1021px;top:674px">电脑</div>
<div class="td tm phn" style="left:1169px;top:674px">1739256...</div>
<div class="abs" style="left:1335px;top:673px;width:23px;height:22px;background:linear-gradient(135deg,#1c2a30 0,#283a40 50%,#1a2428 100%)"></div>
<svg class="abs" style="left:1440px;top:671px" width="32" height="30" viewBox="0 0 32 30"><path d="M1 10L26 1M1 10L31 21M17 15C20 14 24 17 20 19C17 21 21 24 23 25" fill="none" stroke="#666" stroke-width=".9" opacity=".6" stroke-linecap="round"/></svg>
<div class="td" style="left:1546px;top:674px">设备</div>
<div class="abs del" style="left:1671px;top:668px"><svg class="abs" style="left:13px;top:9px" width="14" height="13" viewBox="0 0 14 13"><path d="M1 3h12M5 3V1.5h4V3M3 4.5l.6 7.5h6.8l.6-7.5" fill="none" stroke="#e07070" stroke-width="1.3"/><path d="M5.7 5.5v5M8.3 5.5v5" stroke="#e07070" stroke-width="1.1"/></svg><span class="abs" style="left:32px;top:6px">删除</span></div>
<div class="abs lk" style="left:1763px;top:676px">详情</div>
<div class="abs cb" style="left:272px;top:743px"></div>
<div class="nm" style="left:331px;top:739px">二期办公室</div>
<div class="cd" style="left:331px;top:757px">J68P93LTI</div>
<div class="td" style="left:479px;top:742px;color:#d41f1f">异常</div>
<div class="td tm" style="left:584px;top:742px">2024-11-22 17:48:57</div>
<div class="td" style="left:787px;top:742px">陕西省西...</div>
<svg class="abs" style="left:906px;top:743px" width="36" height="15"><rect x="0.00" y="0" width="9.30" height="7.6" fill="#f4f4f4"/><rect x="9.00" y="0" width="9.30" height="7.6" fill="#d8d8d8"/><rect x="18.00" y="0" width="9.30" height="7.6" fill="#e0e0e0"/><rect x="27.00" y="0" width="9.30" height="7.6" fill="#cccccc"/><rect x="0.00" y="7.5" width="9.30" height="7.5" fill="#dcdcdc"/><rect x="9.00" y="7.5" width="9.30" height="7.5" fill="#dcdcdc"/><rect x="18.00" y="7.5" width="9.30" height="7.5" fill="#d8d8d8"/><rect x="27.00" y="7.5" width="9.30" height="7.5" fill="#b8b8b8"/></svg>
<div class="td" style="left:1021px;top:742px">北门区域东向</div>
<div class="td tm phn" style="left:1169px;top:742px">1739256...</div>
<div class="abs" style="left:1305px;top:729px;width:23px;height:22px;background:linear-gradient(90deg,#6aaac8,#a8d0e0 40%,#5090b0 70%,#c0d8e0)"></div>
<div class="abs" style="left:1335px;top:729px;width:23px;height:22px;background:linear-gradient(90deg,#c04a10,#d86a20 50%,#a03a08)"></div>
<div class="abs" style="left:1365px;top:729px;width:23px;height:22px;background:linear-gradient(90deg,#9a9490,#5a5048 50%,#b0aaa4)"></div>
<div class="abs" style="left:1320px;top:753px;width:23px;height:22px;background:linear-gradient(90deg,#6a5040,#a08070 50%,#504038)"></div>
<div class="abs" style="left:1350px;top:753px;width:23px;height:22px;background:linear-gradient(90deg,#2a3a40,#506870 50%,#203038)"></div>
<svg class="abs" style="left:1440px;top:743px" width="32" height="30" viewBox="0 0 32 30"><path d="M7 9L6 13M12 6L11 9M17 6L16 9M6 17C10 16 14 18 18 17M11 20L13 21" fill="none" stroke="#666" stroke-width=".9" opacity=".6" stroke-linecap="round"/></svg>
<div class="td" style="left:1546px;top:742px">区域</div>
<div class="abs del" style="left:1671px;top:735px"><svg class="abs" style="left:13px;top:9px" width="14" height="13" viewBox="0 0 14 13"><path d="M1 3h12M5 3V1.5h4V3M3 4.5l.6 7.5h6.8l.6-7.5" fill="none" stroke="#e07070" stroke-width="1.3"/><path d="M5.7 5.5v5M8.3 5.5v5" stroke="#e07070" stroke-width="1.1"/></svg><span class="abs" style="left:32px;top:6px">删除</span></div>
<div class="abs lk" style="left:1763px;top:743px">详情</div>
<div class="abs cb" style="left:272px;top:816px"></div>
<div class="nm" style="left:331px;top:812px">二期办公室</div>
<div class="cd" style="left:331px;top:830px">J68P93LTI</div>
<div class="td" style="left:479px;top:815px;color:#5fbf5f">正常</div>
<div class="td tm" style="left:584px;top:815px">2024-11-22 17:47:24</div>
<div class="td" style="left:787px;top:815px">陕西省西...</div>
<svg class="abs" style="left:906px;top:815px" width="36" height="15"><rect x="0.00" y="0" width="9.30" height="7.6" fill="#f4f4f4"/><rect x="9.00" y="0" width="9.30" height="7.6" fill="#d0d0d0"/><rect x="18.00" y="0" width="9.30" height="7.6" fill="#e8e8e8"/><rect x="27.00" y="0" width="9.30" height="7.6" fill="#cccccc"/><rect x="0.00" y="7.5" width="9.30" height="7.5" fill="#d8d8d8"/><rect x="9.00" y="7.5" width="9.30" height="7.5" fill="#d8d8d8"/><rect x="18.00" y="7.5" width="9.30" height="7.5" fill="#d8d8d8"/><rect x="27.00" y="7.5" width="9.30" height="7.5" fill="#c0c0c0"/></svg>
<div class="td" style="left:1021px;top:815px">北门区域东向</div>
<div class="td tm phn" style="left:1169px;top:815px">1739256...</div>
<div class="abs" style="left:1305px;top:802px;width:23px;height:22px;background:linear-gradient(90deg,#8a7a60,#c0a060 50%,#6a5a48)"></div>
<div class="abs" style="left:1335px;top:802px;width:23px;height:22px;background:linear-gradient(90deg,#4a5a60,#b09060 50%,#3a4a50)"></div>
<div class="abs" style="left:1365px;top:802px;width:23px;height:22px;background:linear-gradient(90deg,#3a6a70,#806850 50%,#4a7a80)"></div>
<div class="abs" style="left:1320px;top:826px;width:23px;height:22px;background:linear-gradient(90deg,#a09080,#c0b0a0 50%,#807060)"></div>
<div class="abs" style="left:1350px;top:826px;width:23px;height:22px;background:linear-gradient(90deg,#2a4060,#5a7890 50%,#203050)"></div>
<svg class="abs" style="left:1440px;top:815px" width="32" height="30" viewBox="0 0 32 30"><path d="M4 9L26 8M11 6L16 6M10 11L12 12M12 18L14 18" fill="none" stroke="#666" stroke-width=".9" opacity=".6" stroke-linecap="round"/></svg>
<div class="td" style="left:1546px;top:815px">区域</div>
<div class="abs del" style="left:1671px;top:809px"><svg class="abs" style="left:13px;top:9px" width="14" height="13" viewBox="0 0 14 13"><path d="M1 3h12M5 3V1.5h4V3M3 4.5l.6 7.5h6.8l.6-7.5" fill="none" stroke="#e07070" stroke-width="1.3"/><path d="M5.7 5.5v5M8.3 5.5v5" stroke="#e07070" stroke-width="1.1"/></svg><span class="abs" style="left:32px;top:6px">删除</span></div>
<div class="abs lk" style="left:1763px;top:816px">详情</div>
<div class="abs cb" style="left:272px;top:890px"></div>
<div class="nm" style="left:331px;top:886px">充压机</div>
<div class="cd" style="left:331px;top:904px">VN9U0YJ0T259</div>
<div class="td" style="left:479px;top:888px;color:#5fbf5f">正常</div>
<div class="td tm" style="left:584px;top:888px">2024-11-22 17:32:50</div>
<div class="td" style="left:787px;top:888px">陕西省西...</div>
<svg class="abs" style="left:906px;top:894px" width="36" height="15"><rect x="0.00" y="0" width="9.30" height="7.6" fill="#e0e0e0"/><rect x="9.00" y="0" width="9.30" height="7.6" fill="#cccccc"/><rect x="18.00" y="0" width="9.30" height="7.6" fill="#cccccc"/><rect x="27.00" y="0" width="9.30" height="7.6" fill="#b0b0b0"/><rect x="0.00" y="7.5" width="9.30" height="7.5" fill="#f4f4f4"/><rect x="9.00" y="7.5" width="9.30" height="7.5" fill="#f8f8f8"/><rect x="18.00" y="7.5" width="9.30" height="7.5" fill="#f8f8f8"/><rect x="27.00" y="7.5" width="9.30" height="7.5" fill="#e8e8e8"/></svg>
<div class="td" style="left:1021px;top:888px">机械设备</div>
<div class="td tm phn" style="left:1169px;top:888px">1739256...</div>
<div class="abs" style="left:1305px;top:876px;width:23px;height:22px;background:linear-gradient(90deg,#6a5a48,#a09070 50%,#3a4a50)"></div>
<div class="abs" style="left:1335px;top:876px;width:23px;height:22px;background:linear-gradient(90deg,#8a7048,#c0a060 50%,#504030)"></div>
<div class="abs" style="left:1365px;top:876px;width:23px;height:22px;background:linear-gradient(90deg,#b0a090,#8a7a6a 50%,#c0b0a0)"></div>
<div class="abs" style="left:1320px;top:900px;width:23px;height:22px;background:linear-gradient(90deg,#3a6060,#806850 50%,#3a7080)"></div>
<div class="abs" style="left:1350px;top:900px;width:23px;height:22px;background:linear-gradient(90deg,#3a7090,#70a8c0 50%,#2a5070)"></div>
<svg class="abs" style="left:1440px;top:890px" width="32" height="30" viewBox="0 0 32 30"><path d="M8 8L26 7M10 11L12 12M4 15L8 14L14 16L19 15M10 18L12 19" fill="none" stroke="#666" stroke-width=".9" opacity=".6" stroke-linecap="round"/></svg>
<div class="td" style="left:1546px;top:888px">设备</div>
<div class="abs del" style="left:1671px;top:882px"><svg class="abs" style="left:13px;top:9px" width="14" height="13" viewBox="0 0 14 13"><path d="M1 3h12M5 3V1.5h4V3M3 4.5l.6 7.5h6.8l.6-7.5" fill="none" stroke="#e07070" stroke-width="1.3"/><path d="M5.7 5.5v5M8.3 5.5v5" stroke="#e07070" stroke-width="1.1"/></svg><span class="abs" style="left:32px;top:6px">删除</span></div>
<div class="abs lk" style="left:1763px;top:890px">详情</div>
<div class="abs cb" style="left:272px;top:957px"></div>
<div class="nm" style="left:331px;top:952px">生活水泵房</div>
<div class="td" style="left:479px;top:956px;color:#5fbf5f">正常</div>
<div class="td tm" style="left:584px;top:956px">2024-11-14 14:31:55</div>
<div class="td" style="left:787px;top:956px">陕西省西...</div>
<svg class="abs" style="left:906px;top:958px" width="36" height="15"><rect x="0.00" y="0" width="9.30" height="7.6" fill="#d8d8d8"/><rect x="9.00" y="0" width="9.30" height="7.6" fill="#b8b8b8"/><rect x="18.00" y="0" width="9.30" height="7.6" fill="#c8c8c8"/><rect x="27.00" y="0" width="9.30" height="7.6" fill="#b8b8b8"/><rect x="0.00" y="7.5" width="9.30" height="7.5" fill="#d8d8d8"/><rect x="9.00" y="7.5" width="9.30" height="7.5" fill="#b8b8b8"/><rect x="18.00" y="7.5" width="9.30" height="7.5" fill="#c8c8c8"/><rect x="27.00" y="7.5" width="9.30" height="7.5" fill="#b8b8b8"/></svg>
<div class="td" style="left:1021px;top:956px">设备机房</div>
<div class="td tm phn" style="left:1169px;top:956px">1839121...</div>
<div class="abs" style="left:1297px;top:966px;width:4px;height:1px;background:#999"></div>
<div class="td" style="left:1441px;top:956px">空</div>
<div class="td" style="left:1546px;top:956px">区域</div>
<div class="abs del" style="left:1671px;top:949px"><svg class="abs" style="left:13px;top:9px" width="14" height="13" viewBox="0 0 14 13"><path d="M1 3h12M5 3V1.5h4V3M3 4.5l.6 7.5h6.8l.6-7.5" fill="none" stroke="#e07070" stroke-width="1.3"/><path d="M5.7 5.5v5M8.3 5.5v5" stroke="#e07070" stroke-width="1.1"/></svg><span class="abs" style="left:32px;top:6px">删除</span></div>
<div class="abs lk" style="left:1763px;top:956px">详情</div>
<div id="sbar"><div class="abs" style="left:4px;top:12px;width:0;height:0;border-left:7px solid transparent;border-right:7px solid transparent;border-bottom:11px solid #8c8c8c"></div><div class="abs" style="left:4px;top:35px;width:14px;height:701px;background:#8c8c8c;border-radius:4px"></div><div class="abs" style="left:4px;top:877px;width:0;height:0;border-left:7px solid transparent;border-right:7px solid transparent;border-top:11px solid #8c8c8c"></div></div>
</body></html>
